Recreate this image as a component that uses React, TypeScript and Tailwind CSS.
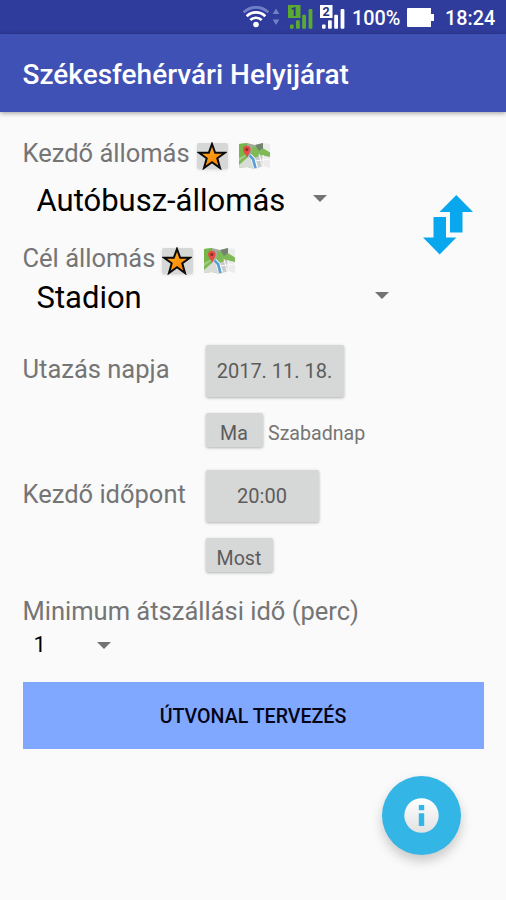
import React from "react";

function Wifi() {
  return (
    <svg className="h-6 w-7 shrink-0" viewBox="0 0 28 24" fill="none" strokeWidth="2.7">
      <path d="M1.6 8.4C8.6 1.6 19.4 1.6 26.4 8.4" stroke="#7480c6" />
      <path d="M4.7 12.2C10 7.2 18 7.2 23.3 12.2" stroke="#fff" />
      <path d="M8.3 16C11.6 13 16.4 13 19.7 16" stroke="#fff" />
      <circle cx="14" cy="20.5" r="2.8" fill="#fff" />
    </svg>
  );
}

function Signal({ n, color }: { n: string; color: string }) {
  return (
    <svg className="h-[25px] w-[25px] shrink-0" viewBox="0 0 25 25">
      <rect x="0" y="0" width="12.5" height="13" fill={color} />
      <text x="6.2" y="11" textAnchor="middle" fontSize="12.5" fontWeight="700" fill="#27327f" fontFamily="Roboto, sans-serif">
        {n}
      </text>
      <rect x="2" y="19.5" width="3.6" height="4.3" rx="1" fill={color} />
      <rect x="8" y="15.3" width="3.8" height="8.5" rx="1" fill={color} />
      <rect x="14.2" y="9.8" width="3.8" height="14" rx="1" fill={color} />
      <rect x="20.6" y="4" width="3.8" height="19.8" rx="1" fill={color} />
    </svg>
  );
}

function StatusBar() {
  return (
    <div className="flex h-[34px] items-start bg-[#303c9c] pl-[242px] font-medium text-white">
      <div className="mt-1 flex">
        <Wifi />
        <svg className="ml-[2px] h-6 w-2" viewBox="0 0 8 24" fill="#7480c6">
          <path d="M4 4.5 7.3 10H.7zM4 21 .7 15.5H7.3z" />
        </svg>
      </div>
      <div className="mt-[5px] ml-[8px] flex gap-[7px]">
        <Signal n="1" color="#5aaa32" />
        <Signal n="2" color="#ffffff" />
      </div>
      <span className="mt-[7px] ml-[7px] w-[55px] text-[19.8px] leading-6 whitespace-nowrap">100%</span>
      <svg className="mt-[8px] h-[19px] w-[27px] shrink-0" viewBox="0 0 27 19" fill="#fff">
        <path d="M1 0H24V6H27V13H24V19H1Q0 19 0 18V1Q0 0 1 0Z" />
      </svg>
      <span className="mt-[7px] ml-[11px] text-[19.8px] leading-6">18:24</span>
    </div>
  );
}

function StarButton() {
  return (
    <button className="flex h-[26px] w-[31px] items-center justify-center rounded-[2px] bg-[#d6d7d7] shadow-[0_1px_3px_rgba(0,0,0,0.12)]">
      <svg className="h-[28px] w-[30px] shrink-0" viewBox="0 0 30 28">
        <defs>
          <linearGradient id="gold" x1="0" y1="0" x2="0.6" y2="1">
            <stop offset="0" stopColor="#ffb52e" />
            <stop offset="1" stopColor="#f98200" />
          </linearGradient>
        </defs>
        <path
          d="M15 2 18.2 10.8H27.8L20.3 16.3 23 26 15 20.3 7 26 9.7 16.3 2.2 10.8H11.8Z"
          fill="url(#gold)"
          stroke="#0b0b0b"
          strokeWidth="2"
        />
      </svg>
    </button>
  );
}

function MapIcon() {
  return (
    <svg className="h-[26px] w-[32px]" viewBox="0 0 32 26">
      <path d="M0 1 8 0V24L0 25Z" fill="#a6cf86" />
      <path d="M8 0 16 2V26L8 24Z" fill="#a3aaa0" />
      <path d="M16 2 24 0V23L16 26Z" fill="#c9cdc9" />
      <path d="M24 0 31 1V25L24 23Z" fill="#ececec" />
      <path d="M0 1 8 0V11L0 15Z" fill="#76b749" />
      <path d="M14 3 22 4 31 9.5V14L22 12 16 15 12 11Z" fill="#7fba56" />
      <path d="M16 2 24 0V5L20 8Z" fill="#748370" />
      <path d="M0 20 8 14 16 20V26L8 24 0 25Z" fill="#d8ddd5" />
      <path d="M0 18 8 12V15L0 22Z" fill="#7eb957" />
      <path d="M10.5 12.5 14 16 17 25" fill="none" stroke="#fff" strokeWidth="4.5" />
      <path d="M10.5 12.5 14 16 16.5 25" fill="none" stroke="#5b9fd8" strokeWidth="2.8" />
      <path d="M16 18 31 16M24 12V23M20 11 23 23" stroke="#fafafa" strokeWidth="1" />
      <path d="M4 6.5A3.8 3.8 0 0 1 11.6 6.5C11.6 9.5 9 11 8.3 15 7 11 4 9.5 4 6.5Z" fill="#e44d43" />
      <circle cx="7.8" cy="6.6" r="1.5" fill="#8d2a26" />
    </svg>
  );
}

function Caret({ className }: { className: string }) {
  return (
    <svg className={`h-[7px] w-[14px] shrink-0 ${className}`} viewBox="0 0 14 7">
      <path d="M0 0H14L7 7Z" fill="#737373" />
    </svg>
  );
}

const label = "h-7 text-[25.5px] leading-[26px] text-[#757575] whitespace-nowrap";
const grayButton =
  "flex items-center justify-center rounded-[2px] bg-[#d6d7d7] leading-6 whitespace-nowrap text-[#5c5c5c] shadow-[0_1px_3px_rgba(0,0,0,0.3)]";

export default function App() {
  return (
    <div className="flex h-[900px] w-[506px] flex-col overflow-hidden bg-[#fafafa] font-[Roboto,sans-serif]">
      <StatusBar />
      <header className="z-10 flex h-[78px] items-center bg-[#3f51b5] pt-1 pl-[22.5px] shadow-[0_1px_5px_rgba(0,0,0,0.4)]">
        <h1 className="text-[28px] leading-8 font-medium whitespace-nowrap text-white">Székesfehérvári Helyijárat</h1>
      </header>

      <main className="flex flex-1 flex-col pt-[28px] pl-[22.5px]">
        <section className="flex h-[205px]">
          <div className="w-[399px]">
            <div className="flex h-7 items-start">
              <span className={`${label} w-[174px]`}>Kezdő állomás</span>
              <div className="mt-[3px] flex gap-[11px]">
                <StarButton />
                <MapIcon />
              </div>
            </div>
            <div className="mt-[14px] flex h-9 items-center pl-[14px]">
              <span className="w-[276px] pt-[2px] text-[31px] leading-9 whitespace-nowrap text-black">Autóbusz-állomás</span>
              <Caret className="-mt-1" />
            </div>
            <div className="mt-[27px] flex h-7 items-start">
              <span className={`${label} w-[139px]`}>Cél állomás</span>
              <div className="mt-[3px] flex gap-[11px]">
                <StarButton />
                <MapIcon />
              </div>
            </div>
            <div className="mt-[6px] flex h-9 items-center pl-[14px]">
              <span className="w-[338px] pt-[2px] text-[31px] leading-9 text-black">Stadion</span>
              <Caret className="-mt-1" />
            </div>
          </div>
          <svg className="mt-[54px] h-[61px] w-[52px]" viewBox="0 0 52 61" fill="#08a7ee">
            <path d="M34.3 1 51 18H40.5V38.5H28V18H17.5ZM11.5 23H24V43.5H34.3L17.7 60.5 1 43.5H11.5Z" />
          </svg>
        </section>

        <section className="flex h-[125px]">
          <span className={`${label} mt-[11px] w-[183px]`}>Utazás napja</span>
          <div>
            <button className={`${grayButton} h-[52px] w-[138px] text-[20px]`}>2017. 11. 18.</button>
            <div className="mt-4 flex">
              <button className={`${grayButton} h-[34px] w-[57px] pt-[7px] text-[19.6px]`}>Ma</button>
              <span className="mt-[9px] ml-[5.5px] text-[19.6px] leading-6 text-[#757575]">Szabadnap</span>
            </div>
          </div>
        </section>

        <section className="flex h-[128px]">
          <span className={`${label} mt-[11px] w-[183px]`}>Kezdő időpont</span>
          <div>
            <button className={`${grayButton} h-[52px] w-[113px] text-[20px]`}>20:00</button>
            <button className={`${grayButton} mt-4 h-[34px] w-[67px] pt-[7px] text-[19.6px]`}>Most</button>
          </div>
        </section>

        <section>
          <div className={label}>Minimum átszállási idő (perc)</div>
          <div className="mt-[5px] flex h-7 items-center pl-[11px]">
            <span className="w-[63px] text-[22px] leading-7 text-black">1</span>
            <Caret className="" />
          </div>
        </section>

        <button className="mt-[23px] h-[67px] w-[461px] bg-[#80a8ff] pt-[3px] text-[19.6px] leading-6 font-medium text-[#050518]">
          ÚTVONAL TERVEZÉS
        </button>

        <button className="mt-[27px] ml-[359px] flex h-[79px] w-[79px] items-center justify-center rounded-full bg-[#33b5e5] shadow-[0_6px_12px_rgba(0,0,0,0.2)]">
          <svg className="h-[35px] w-[35px]" viewBox="0 0 35 35">
            <defs>
              <linearGradient id="disc" x1="0" y1="0" x2="0" y2="1">
                <stop offset="0" stopColor="#ffffff" />
                <stop offset="1" stopColor="#e2e2e2" />
              </linearGradient>
            </defs>
            <circle cx="17.5" cy="17.5" r="17.2" fill="url(#disc)" />
            <path d="M14.8 7H20.2V12.3H14.8ZM14.8 15.3H20.2V28H14.8Z" fill="#33b5e5" />
          </svg>
        </button>
      </main>
    </div>
  );
}
